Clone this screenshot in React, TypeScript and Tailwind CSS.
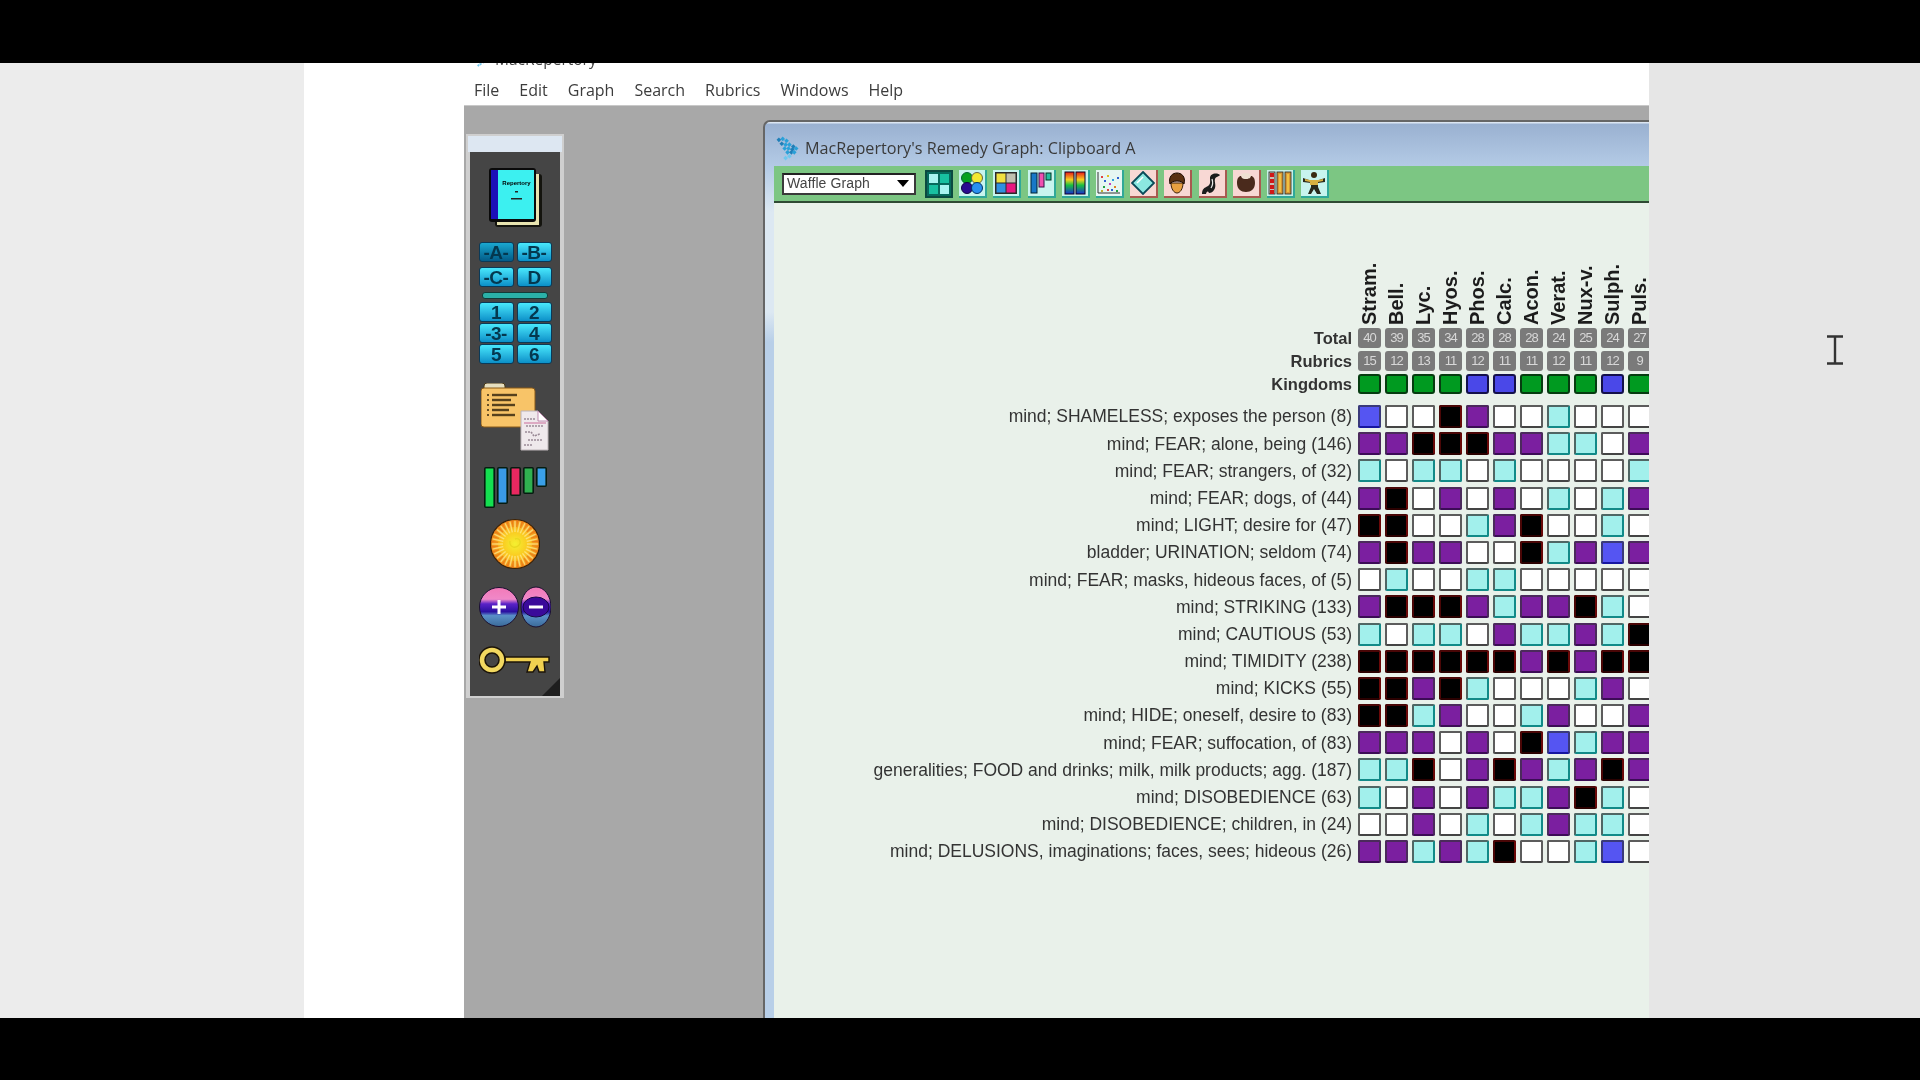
import React from "react";

const names = ["Stram.", "Bell.", "Lyc.", "Hyos.", "Phos.", "Calc.", "Acon.", "Verat.", "Nux-v.", "Sulph.", "Puls."];
const totals = [40, 39, 35, 34, 28, 28, 28, 24, 25, 24, 27];
const rubrics = [15, 12, 13, 11, 12, 11, 11, 12, 11, 12, 9];
const kingdomRow = "ggggbbgggbg";

const rows: [string, string][] = [
  ["mind; SHAMELESS; exposes the person (8)", "bwwkpwwawww"],
  ["mind; FEAR; alone, being (146)", "ppkkkppaawp"],
  ["mind; FEAR; strangers, of (32)", "awaawawwwwa"],
  ["mind; FEAR; dogs, of (44)", "pkwpwpwawap"],
  ["mind; LIGHT; desire for (47)", "kkwwapkwwaw"],
  ["bladder; URINATION; seldom (74)", "pkppwwkapbp"],
  ["mind; FEAR; masks, hideous faces, of (5)", "wawwaawwwww"],
  ["mind; STRIKING (133)", "pkkkpappkaw"],
  ["mind; CAUTIOUS (53)", "awaawpaapak"],
  ["mind; TIMIDITY (238)", "kkkkkkpkpkk"],
  ["mind; KICKS (55)", "kkpkawwwapw"],
  ["mind; HIDE; oneself, desire to (83)", "kkapwwapwwp"],
  ["mind; FEAR; suffocation, of (83)", "pppwpwkbapp"],
  ["generalities; FOOD and drinks; milk, milk products; agg. (187)", "aakwpkpapkp"],
  ["mind; DISOBEDIENCE (63)", "awpwpaapkaw"],
  ["mind; DISOBEDIENCE; children, in (24)", "wwpwawapaaw"],
  ["mind; DELUSIONS, imaginations; faces, sees; hideous (26)", "ppapakwwabw"],
];

const cellClass: Record<string, string> = {
  w: "bg-white border-[#5c5c5c] border-b-[#444]",
  a: "bg-[#a2f0ec] border-[#4f6664] border-b-[#128a88] border-r-[#128a88]",
  p: "bg-[#7b1fa0] border-[#4b2a5c] border-b-[#3c0c56]",
  k: "bg-black border-[#4a0606] border-r-[#6a0808] border-b-[#2a0000]",
  b: "bg-[#5555f2] border-[#3a3a7a] border-b-[#1616a0]",
};

function Cell({ t }: { t: string }) {
  return <div className={`w-[23px] h-[23px] shrink-0 rounded-[2px] border-2 ${cellClass[t]}`} />;
}

function MenuBar() {
  const items = ["File", "Edit", "Graph", "Search", "Rubrics", "Windows", "Help"];
  return (
    <div className="h-[30px] flex items-center gap-[20px] pl-[170px] text-[16px] text-[#3c3c3c] font-['Open_Sans',sans-serif] shrink-0">
      {items.map((m) => (
        <span key={m}>{m}</span>
      ))}
    </div>
  );
}

function AppIcon({ className }: { className: string }) {
  const dots = [
    [3, 4], [7, 3], [11, 5], [6, 8], [10, 9], [14, 9], [18, 11], [9, 13], [13, 13], [17, 14], [21, 13], [12, 17], [16, 17], [19, 17], [14, 21], [10, 23],
  ];
  return (
    <svg viewBox="0 0 26 26" className={className}>
      {dots.map(([x, y], i) => (
        <rect key={i} x={x - 1.7} y={y - 1.7} width="3.4" height="3.4" fill={i > 13 ? "#6fc8ee" : i % 3 === 0 ? "#1f7fb8" : "#2aa0d8"} transform={`rotate(45 ${x} ${y})`} />
      ))}
    </svg>
  );
}

function KeyBtn({ label, dark }: { label: string; dark?: boolean }) {
  return (
    <div
      className={`h-[20px] w-[35px] rounded-[3px] border border-[#0a3a58] flex items-center justify-center text-[19px] tracking-[-0.5px] leading-none font-bold text-[#04384f] font-['Liberation_Sans',sans-serif] ${
        dark ? "bg-gradient-to-b from-[#1aa8d0] to-[#045c88]" : "bg-gradient-to-b from-[#48e8fc] to-[#0a90c8]"
      }`}
    >
      {label}
    </div>
  );
}

function Book() {
  return (
    <svg viewBox="0 0 53 59" className="w-[53px] h-[59px]">
      <rect x="6" y="6" width="47" height="53" rx="3" fill="#14140e" />
      <rect x="8" y="6" width="42" height="51" fill="#e8e4b0" />
      <rect x="0" y="0" width="47" height="54" rx="3" fill="#0a0a0a" />
      <rect x="2" y="2" width="7" height="49" fill="#1c10b8" />
      <rect x="9" y="2" width="36" height="49" fill="#3cf0f0" />
      <text x="27.5" y="17" textAnchor="middle" fontSize="6" fontWeight="700" fontFamily="Liberation Sans, sans-serif" fill="#000">Repertory</text>
      <rect x="26" y="23" width="3" height="1.5" fill="#222" />
      <rect x="22" y="30" width="11" height="1.5" fill="#222" />
    </svg>
  );
}

function Folder() {
  return (
    <svg viewBox="0 0 68 68" className="w-[68px] h-[68px]">
      <rect x="3" y="0" width="21" height="8" rx="3" fill="#e6dfc0" stroke="#4a3a18" strokeWidth="1" />
      <rect x="0" y="5" width="54" height="39" rx="3" fill="#f8c468" stroke="#8a5a18" strokeWidth="1" />
      {[12, 17, 22, 27, 32].map((y, i) => (
        <g key={y}>
          <circle cx="7" cy={y} r="1" fill="#3a2a10" />
          <rect x="11" y={y - 1.2} width={[25, 19, 23, 17, 23][i]} height="2.4" fill="#3a2a10" opacity="0.85" />
        </g>
      ))}
      <path d="M40 28h17l10 10v29H40z" fill="#efe9ec" stroke="#bcb4b8" strokeWidth="1" />
      <path d="M57 28v10h10z" fill="#ffffff" stroke="#b070a0" strokeWidth="0.8" />
      <path d="M43 36h12M45 43h18M44 49h6l3 4 6-2M47 57h14M43 62h9" stroke="#9a8a96" strokeWidth="1.6" fill="none" strokeDasharray="2 1" />
      <path d="M43 40h22" stroke="#d080a8" strokeWidth="1.2" />
    </svg>
  );
}

function Bars() {
  const bars = [
    { x: 0, h: 41, c: "#14e050" },
    { x: 13, h: 37, c: "#3a9ae8" },
    { x: 26, h: 29, c: "#e82860" },
    { x: 39, h: 27, c: "#30b050" },
    { x: 52, h: 20, c: "#3aa0e8" },
  ];
  return (
    <svg viewBox="0 0 63 41" className="w-[63px] h-[41px]">
      {bars.map((b) => (
        <rect key={b.x} x={b.x + 0.8} y="0.8" width="9.4" height={b.h - 1.6} rx="1" fill={b.c} stroke="#061c10" strokeWidth="1.6" />
      ))}
    </svg>
  );
}

function Sun() {
  const rays = Array.from({ length: 28 }, (_, i) => (i * 360) / 28);
  return (
    <svg viewBox="0 0 50 52" className="w-[50px] h-[52px]">
      <defs>
        <radialGradient id="sunG">
          <stop offset="0" stopColor="#f4f030" />
          <stop offset="0.55" stopColor="#fbc820" />
          <stop offset="1" stopColor="#ef8818" />
        </radialGradient>
      </defs>
      <circle cx="25" cy="26" r="24.5" fill="url(#sunG)" stroke="#3a2208" strokeWidth="1.2" />
      {rays.map((r) => (
        <line key={r} x1="25" y1="14" x2="25" y2="3" stroke="#fff0a0" strokeWidth="1.4" opacity="0.65" transform={`rotate(${r} 25 26)`} />
      ))}
      {rays.map((r) => (
        <line key={`o${r}`} x1="25" y1="9" x2="25" y2="2" stroke="#e8701a" strokeWidth="1.2" opacity="0.7" transform={`rotate(${r + 6} 25 26)`} />
      ))}
      <path d="M25 21c5-2 7 4 3 7s-9 0-8-5" stroke="#e8d820" strokeWidth="1.4" fill="none" />
    </svg>
  );
}

function PlusMinus() {
  return (
    <svg viewBox="0 0 72 44" className="w-[72px] h-[44px]">
      <defs>
        <linearGradient id="pmG" x1="0" y1="0" x2="0" y2="1">
          <stop offset="0" stopColor="#f27ab8" />
          <stop offset="0.3" stopColor="#f088c8" />
          <stop offset="0.42" stopColor="#5a22c8" />
          <stop offset="0.62" stopColor="#2a10a0" />
          <stop offset="0.72" stopColor="#5a90c8" />
          <stop offset="1" stopColor="#3a6a98" />
        </linearGradient>
      </defs>
      <circle cx="20" cy="22" r="19.5" fill="url(#pmG)" stroke="#1a1030" />
      <path d="M20 15v14M13 22h14" stroke="#fff" strokeWidth="3" />
      <ellipse cx="57" cy="22" rx="15" ry="20" fill="url(#pmG)" stroke="#1a1030" />
      <ellipse cx="57" cy="22" rx="13" ry="10" fill="#3a0a9a" stroke="#180848" />
      <path d="M50 22h14" stroke="#fff" strokeWidth="3" />
    </svg>
  );
}

function KeyIcon() {
  return (
    <svg viewBox="0 0 72 30" className="w-[72px] h-[30px]">
      <path d="M26 11h44v5h-5l1 10h-6l-2-6-4 6h-6l3-10H26z" fill="#f0d050" stroke="#1c1408" strokeWidth="1.4" />
      <circle cx="13" cy="14" r="10" fill="none" stroke="#1c1408" strokeWidth="7.5" />
      <circle cx="13" cy="14" r="10" fill="none" stroke="#f2d860" strokeWidth="4.5" />
    </svg>
  );
}

function Palette() {
  return (
    <div className="w-[98px] h-[564px] mt-[28px] ml-[2px] shrink-0 border-2 border-[#cfcfcf] bg-[#cfcfcf] flex flex-col">
      <div className="h-[16px] bg-[#dde7f2] shrink-0" />
      <div className="flex-1 mx-[2px] bg-[#454545] flex flex-col items-center pt-[16px] relative">
        <Book />
        <div className="grid grid-cols-2 gap-x-[3px] gap-y-[5px] mt-[15px]">
          <KeyBtn label="-A-" dark />
          <KeyBtn label="-B-" />
          <KeyBtn label="-C-" />
          <KeyBtn label="D" />
        </div>
        <div className="w-[66px] h-[7px] mt-[5px] rounded-[3px] bg-[#2ab0a8] border border-[#123a38]" />
        <div className="grid grid-cols-2 gap-x-[3px] gap-y-[1px] mt-[3px]">
          <KeyBtn label="1" />
          <KeyBtn label="2" />
          <KeyBtn label="-3-" />
          <KeyBtn label="4" />
          <KeyBtn label="5" />
          <KeyBtn label="6" />
        </div>
        <div className="mt-[19px]"><Folder /></div>
        <div className="mt-[16px]"><Bars /></div>
        <div className="mt-[10px]"><Sun /></div>
        <div className="mt-[15px]"><PlusMinus /></div>
        <div className="mt-[17px]"><KeyIcon /></div>
        <div className="absolute right-0 bottom-0 w-0 h-0 border-l-[18px] border-l-transparent border-b-[18px] border-b-[#1e1e1e]" />
      </div>
    </div>
  );
}

function Tool({ bg, children, pressed }: { bg: string; children: React.ReactNode; pressed?: boolean }) {
  return (
    <div className={`w-[28px] h-[28px] shrink-0 ${bg} ${pressed ? "border-2 border-[#0a4a40]" : ""} flex items-center justify-center`}>
      <svg viewBox="0 0 24 24" className="w-[24px] h-[24px]">{children}</svg>
    </div>
  );
}

const aqua = "bg-[#c8f4ee] border-r-2 border-b-2 border-[#30a898]";
const pink = "bg-[#f8d8d4] border-r-2 border-b-2 border-[#a85a50]";

function Toolbar() {
  return (
    <div className="h-[37px] bg-[#7cc683] border-b-2 border-[#2f4a34] flex items-center pl-[8px] shrink-0">
      <div className="w-[134px] h-[22px] bg-white border-2 border-[#3a3a3a] border-t-[#222] flex items-center justify-between pl-[3px] pr-[5px] text-[14px] tracking-[0.1px] text-[#444] font-['Liberation_Sans',sans-serif]">
        <span>Waffle Graph</span>
        <span className="w-0 h-0 border-l-[6px] border-r-[6px] border-t-[7px] border-l-transparent border-r-transparent border-t-black" />
      </div>
      <div className="flex gap-[6.2px] ml-[9px]">
        <Tool bg="bg-[#076a5c]" pressed>
          <rect x="2" y="2" width="9" height="9" fill="#a8f4f0" />
          <rect x="13" y="2" width="9" height="9" fill="#18c0a0" />
          <rect x="2" y="13" width="9" height="9" fill="#18c0a0" />
          <rect x="13" y="13" width="9" height="9" fill="#a8f4f0" />
        </Tool>
        <Tool bg={aqua}>
          <circle cx="7" cy="7" r="5.5" fill="#06a020" stroke="#063" />
          <circle cx="17" cy="7" r="5.5" fill="#f4e830" stroke="#664" />
          <circle cx="7" cy="17" r="5.5" fill="#2a0a90" stroke="#104" />
          <circle cx="17" cy="17" r="5.5" fill="#2a90f0" stroke="#036" />
        </Tool>
        <Tool bg={aqua}>
          <rect x="1" y="1" width="22" height="22" fill="#2a2a2a" />
          <rect x="2.5" y="2.5" width="9" height="9" fill="#f0e040" />
          <rect x="12.5" y="2.5" width="9" height="9" fill="#c0c0b0" />
          <rect x="2.5" y="12.5" width="9" height="9" fill="#3090e0" />
          <rect x="12.5" y="12.5" width="9" height="9" fill="#e81880" />
        </Tool>
        <Tool bg={aqua}>
          <rect x="2" y="2" width="6" height="20" fill="#1878c8" stroke="#023" />
          <rect x="10" y="2" width="5" height="14" fill="#f050b0" stroke="#314" />
          <rect x="17" y="2" width="5" height="7" fill="#20c0a0" stroke="#032" />
        </Tool>
        <Tool bg={aqua}>
          <defs>
            <linearGradient id="rb" x1="0" y1="0" x2="0" y2="1">
              <stop offset="0" stopColor="#e81818" />
              <stop offset="0.35" stopColor="#f8d020" />
              <stop offset="0.6" stopColor="#18c040" />
              <stop offset="1" stopColor="#1830d0" />
            </linearGradient>
          </defs>
          <rect x="2" y="1" width="9" height="22" fill="url(#rb)" stroke="#102" />
          <rect x="13" y="1" width="9" height="22" fill="url(#rb)" stroke="#102" />
        </Tool>
        <Tool bg="bg-[#e6f6f2] border-r-2 border-b-2 border-[#30a898]">
          <path d="M1 1v21h22" stroke="#333" fill="none" strokeWidth="1" />
          {[[4, 5, "#e04040"], [7, 9, "#3060d0"], [10, 4, "#e0c020"], [6, 15, "#20a040"], [12, 12, "#c040c0"], [15, 8, "#30a0e0"], [17, 15, "#e08020"], [20, 6, "#3060d0"], [10, 18, "#e04040"], [19, 19, "#20a040"], [14, 18, "#3060d0"], [4, 19, "#c0b030"]].map(([x, y, c], i) => (
            <rect key={i} x={x as number} y={y as number} width="2" height="2" fill={c as string} />
          ))}
        </Tool>
        <Tool bg={pink}>
          <path d="M12 1l11 11-11 11L1 12z" fill="#8ce8e0" stroke="#0a4a58" strokeWidth="1.8" />
          <path d="M6 12l6-6" stroke="#fff" strokeWidth="1.5" />
        </Tool>
        <Tool bg={pink}>
          <path d="M6 12c0 6 3 10 6 10s6-4 6-10z" fill="#e8a040" stroke="#3a2008" />
          <path d="M5 13C3 5 8 2 12 2s9 3 7 11c-2-4-12-4-14 0z" fill="#5a3010" stroke="#1a0a00" />
        </Tool>
        <Tool bg={pink}>
          <path d="M2 23c0-5 2-6 6-8 3-2 2-5 2-8 0-4 6-6 10-3-1 2-4 1-5 4-1 3 2 7-1 11-1 2-3 3-5 3-1-2-2-2-3 1H2z" fill="#1c1c1c" />
          <path d="M12 8c1 3 1 6-1 9" stroke="#e8e8e8" strokeWidth="1.3" fill="none" />
        </Tool>
        <Tool bg={pink}>
          <ellipse cx="12" cy="6" rx="6" ry="4" fill="#f0e0d0" />
          <path d="M3 12c0-5 2-7 4-7 1 3 3 3 5 3s4 0 5-3c2 0 4 2 4 7 0 6-4 9-9 9S3 18 3 12z" fill="#4a2a1c" />
        </Tool>
        <Tool bg="bg-[#c8efe6] border-r-2 border-b-2 border-[#30a898]">
          {[1, 9, 17].map((x, i) => (
            <g key={x}>
              <rect x={x} y="1" width="6" height="22" fill={i === 0 ? "#c8c0b8" : "#d89838"} stroke="#222" strokeWidth="0.8" />
              {i === 0 && [2, 8, 14, 19].map((y) => <rect key={y} x={x + 1} y={y} width="4" height="4" fill="#d01818" />)}
              {i > 0 && <rect x={x + 2} y="3" width="2" height="18" fill="#f0c040" />}
            </g>
          ))}
        </Tool>
        <Tool bg={aqua}>
          <circle cx="12" cy="4" r="3" fill="#3a2a10" />
          <path d="M1 7l6 2h10l6-2v4l-7 1v4l3 7h-4l-3-5-3 5H6l3-7v-4l-8-1z" fill="#2a2a1c" />
          <path d="M3 8l5 1h8l5-1v2l-5 1v3H8v-3l-5-1z" fill="#d8b040" />
        </Tool>
      </div>
    </div>
  );
}

function Graph() {
  return (
    <div className="flex-1 bg-[#e9f1ea] overflow-hidden pt-[58px] font-['Liberation_Sans',sans-serif]">
      <div className="flex pl-[584px] gap-[4px] h-[64px]">
        {names.map((n) => (
          <div key={n} className="w-[23px] shrink-0 flex items-start justify-center">
            <span className="h-[64px] text-left [writing-mode:vertical-rl] rotate-180 text-[20px] leading-[23px] font-bold text-[#1c1c1c]">{n}</span>
          </div>
        ))}
      </div>
      <div className="mt-[3px] flex flex-col gap-[3px]">
        {[
          ["Total", totals],
          ["Rubrics", rubrics],
        ].map(([label, vals]) => (
          <div key={label as string} className="flex items-center h-[20px]">
            <div className="w-[578px] shrink-0 text-right text-[16.5px] font-bold text-[#333]">{label as string}</div>
            <div className="flex gap-[4px] ml-[6px]">
              {(vals as number[]).map((v, i) => (
                <div key={i} className="w-[23px] h-[20px] shrink-0 rounded-[3px] bg-[#7a7a7a] text-[#d8d8d8] text-[13px] tracking-[-1px] flex items-center justify-center">{v}</div>
              ))}
            </div>
          </div>
        ))}
        <div className="flex items-center h-[20px]">
          <div className="w-[578px] shrink-0 text-right text-[16.5px] font-bold text-[#333]">Kingdoms</div>
          <div className="flex gap-[4px] ml-[6px]">
            {kingdomRow.split("").map((k, i) => (
              <div key={i} className={`w-[23px] h-[20px] shrink-0 rounded-[3px] border-2 ${k === "g" ? "bg-[#009a20] border-[#063c10]" : "bg-[#4a48e8] border-[#14104a]"}`} />
            ))}
          </div>
        </div>
      </div>
      <div className="mt-[11px] flex flex-col gap-[4.2px]">
        {rows.map(([label, vals]) => (
          <div key={label} className="flex items-center h-[23px]">
            <div className="w-[578px] shrink-0 text-right text-[17.5px] text-[#333] whitespace-nowrap">{label}</div>
            <div className="flex gap-[4px] ml-[6px]">
              {vals.split("").map((t, i) => (
                <Cell key={i} t={t} />
              ))}
            </div>
          </div>
        ))}
      </div>
    </div>
  );
}

function GraphWindow() {
  return (
    <div className="flex-1 min-w-0 ml-[199px] mt-[14px] border-l-2 border-t-2 border-[#666] rounded-tl-[7px] bg-[linear-gradient(180deg,#dce6f2_0,#dce6f2_1px,#9ab1d1_2px,#b4cbe6_45px,#dce8f2_90px,#dce8f2_190px,#b8cfe8_220px)] flex flex-col overflow-hidden">
      <div className="h-[44px] flex items-center pl-[11px] pt-[9px] gap-[4px] shrink-0 text-[16.2px] text-[#3a3a3a] font-['Open_Sans',sans-serif]">
        <AppIcon className="w-[25px] h-[25px]" />
        <span>MacRepertory's Remedy Graph: Clipboard A</span>
      </div>
      <div className="flex-1 min-h-0 ml-[9px] flex flex-col">
        <Toolbar />
        <Graph />
      </div>
    </div>
  );
}

export default function App() {
  return (
    <div className="w-[1920px] h-[1080px] bg-black flex flex-col overflow-hidden">
      <div className="h-[63px] shrink-0" />
      <div className="h-[955px] shrink-0 flex blur-[0.5px]">
        <div className="w-[304px] shrink-0 bg-[#ececec]" />
        <div className="w-[1345px] shrink-0 bg-white flex flex-col overflow-hidden">
          <div className="h-[12px] shrink-0 overflow-hidden pl-[169px] font-['Open_Sans',sans-serif] text-[15.5px] leading-[20px] text-[#444] flex items-start gap-[8px]">
            <AppIcon className="w-[14px] h-[14px] -mt-[10px] shrink-0" />
            <span className="-mt-[14px]">MacRepertory</span>
          </div>
          <MenuBar />
          <div className="flex-1 min-h-0 ml-[160px] bg-[#a8a8a8] border-t border-[#c8c8c8] flex">
            <Palette />
            <GraphWindow />
          </div>
        </div>
        <div className="flex-1 bg-[#e6e6e6] pl-[177px] pt-[272px]">
          <svg viewBox="0 0 18 30" className="w-[18px] h-[30px]">
            <path d="M1 1.5h16M1 28.5h16M9 1.5v27" stroke="#333" strokeWidth="2.4" fill="none" />
          </svg>
        </div>
      </div>
      <div className="flex-1" />
    </div>
  );
}
